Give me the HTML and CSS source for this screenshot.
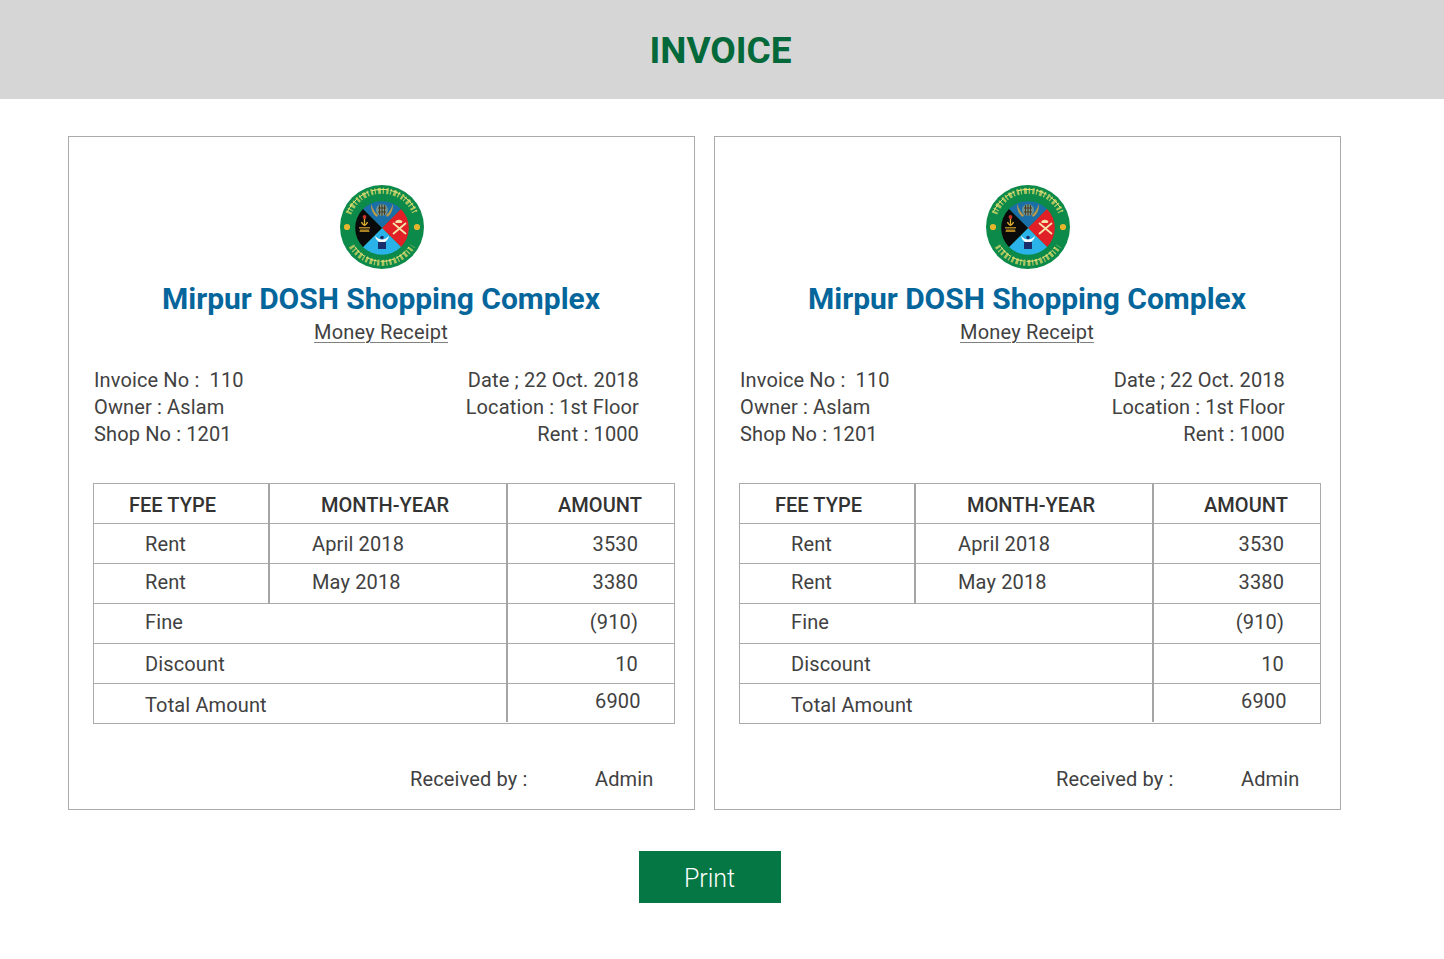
FILE: index.html
```html
<!DOCTYPE html>
<html lang="en">
<head>
<meta charset="utf-8">
<title>Invoice</title>
<link rel="stylesheet" href="styles.css">
</head>
<body>
<svg class="defs" width="0" height="0" aria-hidden="true">
  <symbol id="crest" viewBox="0 0 84 84">
    <circle cx="42" cy="42" r="42" fill="#0b8a4a"/>
    <path d="M8.500 28.500A36 36 0 0 1 75.500 28.500" fill="none" stroke="#e8dc6a" stroke-width="6" stroke-dasharray="2.200 1.600 1.200 2.200 3 1.800 1.400 2.400" opacity=".72"/>
    <path d="M7.500 26.500A38 38 0 0 1 76.500 26.500" fill="none" stroke="#f0e47a" stroke-width="1" stroke-dasharray="16 2.500 11 3.500"/>
    <path d="M11.500 61A36 36 0 0 0 72.500 61" fill="none" stroke="#e8dc6a" stroke-width="6" stroke-dasharray="2.600 1.800 1.200 2 2.200 2.200" opacity=".72"/>
    <path d="M15 62A32.500 32.500 0 0 0 69 62" fill="none" stroke="#f0e47a" stroke-width="1" stroke-dasharray="13 2.500 12 3"/>
    <circle cx="7" cy="42" r="3.100" fill="#e6b62c"/>
    <circle cx="77" cy="42" r="3.100" fill="#e6b62c"/>
    <circle cx="42" cy="43" r="28" fill="#0b8a4a"/>
    <path d="M42 43 23 24A27 27 0 0 1 61 24Z" fill="#1b6fa8"/>
    <path d="M42 43 61 24A27 27 0 0 1 61 62Z" fill="#e01f26"/>
    <path d="M42 43 61 62A27 27 0 0 1 23 62Z" fill="#29b3e8"/>
    <path d="M42 43 23 62A27 27 0 0 1 23 24Z" fill="#0a0a0a"/>
    <path d="M31 19c0 6 2 11 6 13l1-2c-3-2-5-6-7-11Zm22 0c0 6-2 11-6 13l-1-2c3-2 5-6 7-11Z" fill="#b9994a"/>
    <circle cx="42" cy="25" r="6" fill="#d3c27a" opacity=".45"/>
    <path d="M39.500 30V20M42 31V19M44.500 30V20M38 23H46M38 27H46" stroke="#4a3514" stroke-width=".9" fill="none"/>
    <path d="M19 42h11v1.500H19Zm1 2.500h9l.5 2.500h-10Z" fill="#a98222"/>
    <path d="M24.500 32v9M21.500 37c.8 2 1.800 3 3 3s2.200-1 3-3" stroke="#dcae2c" stroke-width="1.300" fill="none"/>
    <circle cx="24.500" cy="32" r="1.900" fill="#c8352a"/>
    <path d="M53 38l13 11M66 38 53 49" stroke="#f7e2a8" stroke-width="1.800"/>
    <path d="M55 37a4 3 0 0 1 7.500-.5l-1 1.500h-5.500Z" fill="#f7e2a8"/>
    <path d="M35 51c2.500 2.500 4.500 3.500 7 3.500s4.500-1 7-3.500c-1 4-3.500 6.500-7 6.500s-6-2.500-7-6.500Z" fill="#fff"/>
    <path d="M38 57h8v7h-8Z" fill="#1c2d6b"/>
    <circle cx="42" cy="52.500" r="1.800" fill="#1c2d6b"/>
  </symbol>
</svg>

<header class="page-header">
  <h1 class="page-title">INVOICE</h1>
</header>

<main class="page-main">
  <div class="cards">
    <section class="card">
      <svg class="crest"><use href="#crest"/></svg>
      <h2 class="org">Mirpur DOSH Shopping Complex</h2>
      <p class="subtitle"><span class="subtitle-text">Money Receipt</span></p>
      <div class="meta">
        <ul class="meta-list">
          <li>Invoice No :&nbsp; 110</li>
          <li>Owner : Aslam</li>
          <li>Shop No : 1201</li>
        </ul>
        <ul class="meta-list meta-right">
          <li>Date ; 22 Oct. 2018</li>
          <li>Location : 1st Floor</li>
          <li>Rent : 1000</li>
        </ul>
      </div>
      <table class="fees">
        <colgroup><col class="col-a"><col class="col-b"><col class="col-c"></colgroup>
        <tr class="head"><th class="fee-head">FEE TYPE</th><th class="month-head">MONTH-YEAR</th><th class="amount-head">AMOUNT</th></tr>
        <tr class="r1"><td class="name">Rent</td><td class="month">April 2018</td><td class="amt">3530</td></tr>
        <tr class="r2"><td class="name">Rent</td><td class="month">May 2018</td><td class="amt">3380</td></tr>
        <tr class="r3"><td class="name" colspan="2">Fine</td><td class="amt">(910)</td></tr>
        <tr class="r4"><td class="name" colspan="2">Discount</td><td class="amt">10</td></tr>
        <tr class="r5"><td class="name" colspan="2">Total Amount</td><td class="amt">6900</td></tr>
      </table>
      <div class="received"><span>Received by :</span><span>Admin</span></div>
    </section>
    <section class="card">
      <svg class="crest"><use href="#crest"/></svg>
      <h2 class="org">Mirpur DOSH Shopping Complex</h2>
      <p class="subtitle"><span class="subtitle-text">Money Receipt</span></p>
      <div class="meta">
        <ul class="meta-list">
          <li>Invoice No :&nbsp; 110</li>
          <li>Owner : Aslam</li>
          <li>Shop No : 1201</li>
        </ul>
        <ul class="meta-list meta-right">
          <li>Date ; 22 Oct. 2018</li>
          <li>Location : 1st Floor</li>
          <li>Rent : 1000</li>
        </ul>
      </div>
      <table class="fees">
        <colgroup><col class="col-a"><col class="col-b"><col class="col-c"></colgroup>
        <tr class="head"><th class="fee-head">FEE TYPE</th><th class="month-head">MONTH-YEAR</th><th class="amount-head">AMOUNT</th></tr>
        <tr class="r1"><td class="name">Rent</td><td class="month">April 2018</td><td class="amt">3530</td></tr>
        <tr class="r2"><td class="name">Rent</td><td class="month">May 2018</td><td class="amt">3380</td></tr>
        <tr class="r3"><td class="name" colspan="2">Fine</td><td class="amt">(910)</td></tr>
        <tr class="r4"><td class="name" colspan="2">Discount</td><td class="amt">10</td></tr>
        <tr class="r5"><td class="name" colspan="2">Total Amount</td><td class="amt">6900</td></tr>
      </table>
      <div class="received"><span>Received by :</span><span>Admin</span></div>
    </section>
  </div>
  <div class="actions"><button class="print" type="button">Print</button></div>
</main>
</body>
</html>
```

FILE: styles.css
```css
* { box-sizing: border-box; }
html, body { margin: 0; padding: 0; }
body {
  background: #fff;
  color: #414141;
  font-family: Roboto, "Liberation Sans", sans-serif;
  font-size: 20px;
  letter-spacing: 0.13px;
}
.defs { display: block; height: 0; }
.page-header {
  height: 99px;
  padding-top: 2px;
  background: #d6d6d6;
  display: flex;
  align-items: center;
  justify-content: center;
}
.page-title {
  margin: 0 3px 0 0;
  font-family: Roboto, sans-serif;
  font-size: 37px;
  font-weight: 700;
  letter-spacing: -0.05px;
  color: #03693a;
  line-height: 1;
}
.page-main { padding: 37px 0 0 68px; }
.cards { display: flex; gap: 19px; }
.card {
  width: 627px;
  height: 674px;
  border: 1px solid #aaa;
  padding: 48px 19px 0 24px;
  display: flex;
  flex-direction: column;
}
.crest {
  width: 84px;
  height: 84px;
  display: block;
  margin: 0 0 0 247px;
  filter: blur(0.3px);
}
.org {
  margin: 12px 0 0;
  width: 576px;
  text-align: center;
  font-size: 30px;
  line-height: 36px;
  font-weight: 700;
  letter-spacing: -0.03px;
  color: #05669b;
  white-space: nowrap;
}
.subtitle {
  margin: 1px 0 0;
  width: 576px;
  text-align: center;
  line-height: 28px;
  letter-spacing: 0.2px;
}
.subtitle-text {
  text-decoration: underline;
  text-decoration-color: #808080;
  text-underline-offset: 3px;
  text-decoration-thickness: 1px;
}
.meta {
  display: flex;
  justify-content: space-between;
  margin: 21px 0 0 1px;
  width: 545px;
}
.meta-list { list-style: none; margin: 0; padding: 0; line-height: 27px; }
.meta-right { text-align: right; }
.fees {
  margin-top: 35px;
  width: 582px;
  table-layout: fixed;
  border-collapse: separate;
  border-spacing: 0;
  border-top: 1px solid #aaa;
  border-left: 1px solid #aaa;
  border-right: 1px solid #aaa;
}
.col-a { width: 176px; }
.col-b { width: 238px; }
.col-c { width: 166px; }
.fees th, .fees td {
  height: 40px;
  padding: 0;
  border-bottom: 1px solid #aaa;
  border-right: 2px solid #a5a5a5;
  font-size: 20px;
  line-height: 24px;
  vertical-align: middle;
}
.fees th:last-child, .fees td:last-child { border-right: 0; }
.fees th {
  font-weight: 500;
  text-align: center;
  color: #333;
  padding-top: 3px;
  letter-spacing: 0.05px;
}
.fees .fee-head { padding-right: 17px; }
.fees .month-head { padding-right: 6px; }
.fees .amount-head { text-align: right; padding-right: 32px; }
.fees .name { padding-left: 51px; }
.fees .month { padding-left: 42px; }
.fees .amt { text-align: right; padding-right: 36px; }
.r2 td { padding-bottom: 3px; }
.r3 td { padding-bottom: 3px; }
.fees .r5 .name {
  border-right: 0;
  padding-top: 3px;
  background: linear-gradient(#a5a5a5, #a5a5a5) right top / 2px 38px no-repeat;
}
.fees .r5 .amt { padding-bottom: 5px; padding-right: 33.500px; }
.received {
  display: flex;
  margin: 41px 0 0 317px;
  line-height: 28px;
}
.received span:first-child { width: 185px; }
.actions { width: 1283px; display: flex; justify-content: center; margin-top: 41px; }
.print {
  width: 142px;
  height: 52px;
  border: 0;
  border-radius: 0;
  padding: 2px 0 0;
  background: #057744;
  color: #fff;
  font-family: Roboto, sans-serif;
  font-size: 25px;
  font-weight: 300;
}
```
